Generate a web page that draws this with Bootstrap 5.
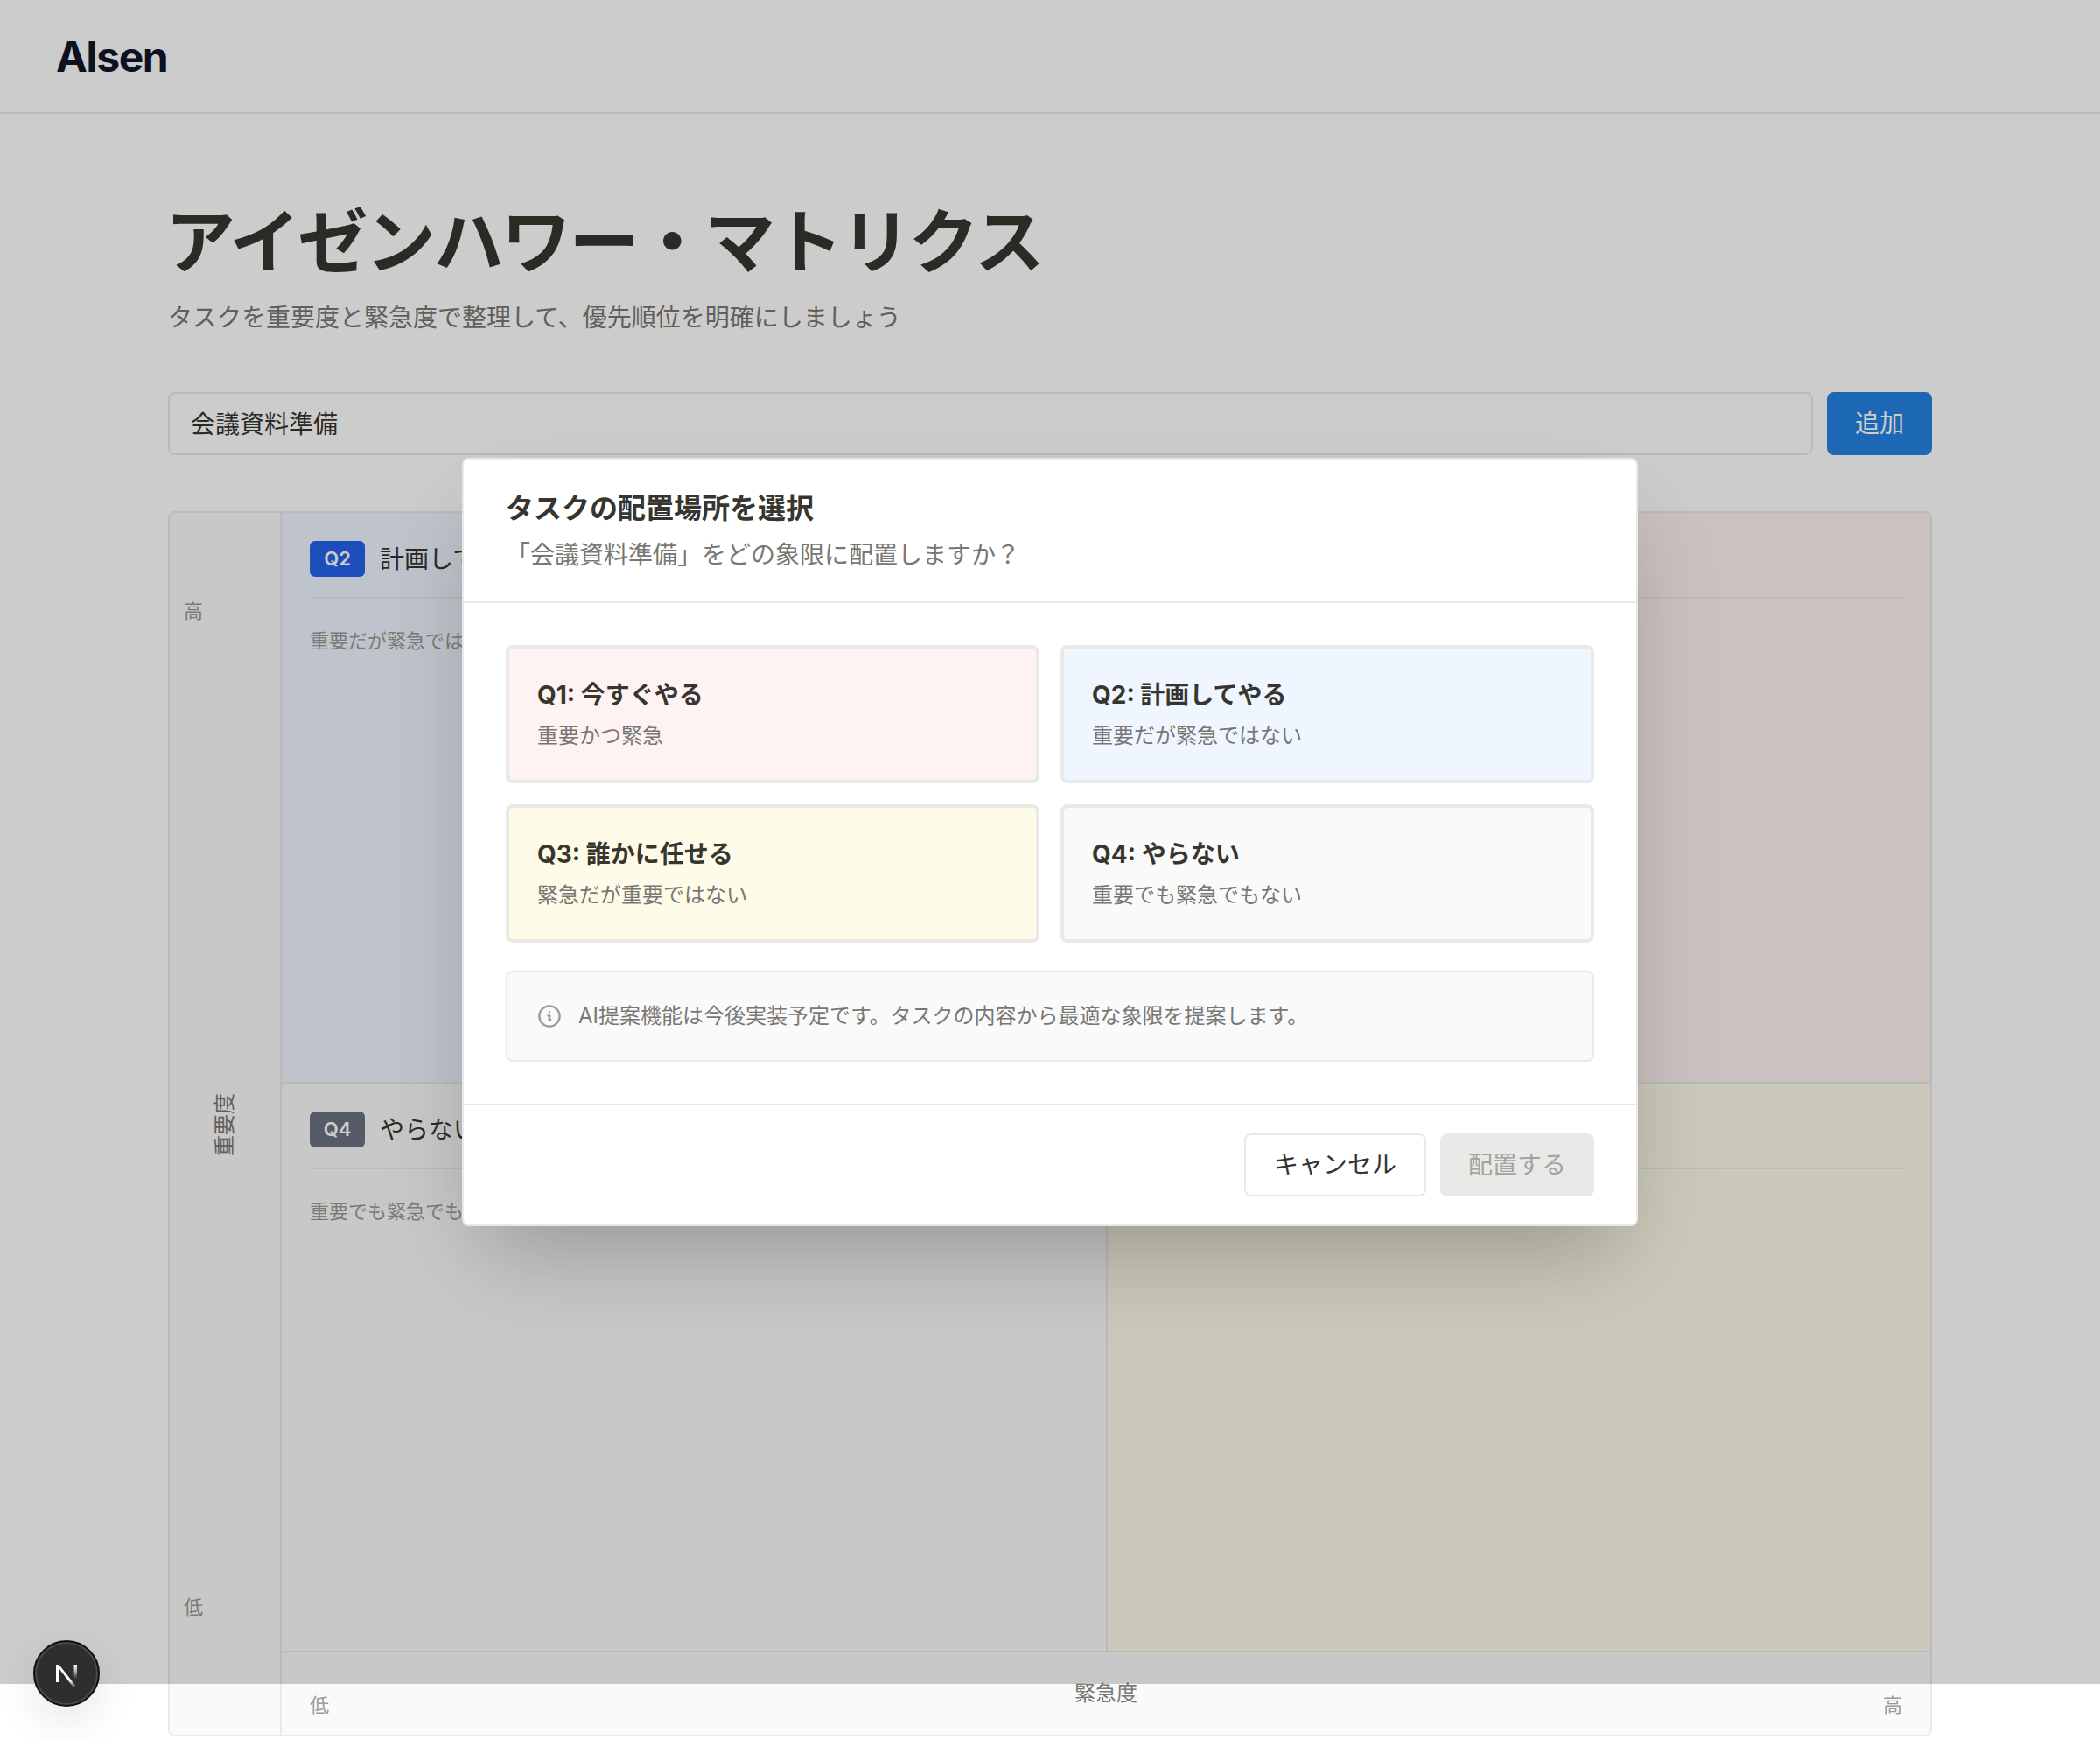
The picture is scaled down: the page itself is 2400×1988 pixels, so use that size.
<!DOCTYPE html>
<html lang="ja">
<head>
    <meta charset="UTF-8">
    <meta name="viewport" content="width=device-width, initial-scale=1.0">
    <title>Alsen - アイゼンハワー・マトリクス</title>
    <link href="https://cdn.jsdelivr.net/npm/bootstrap@5.3.2/dist/css/bootstrap.min.css" rel="stylesheet">
    <style>
        body {
            height: 1988px;
            overflow: hidden;
            background: #fff;
            color: #37352f;
            font-family: Inter, "Noto Sans CJK JP", sans-serif;
        }
        .app-header {
            height: 130px;
            padding: 2px 64px 0;
            border-bottom: 2px solid #e9e9e7;
        }
        .app-logo {
            font-size: 48px;
            font-weight: 700;
            letter-spacing: -1.5px;
            color: #0f172a;
        }
        .page-main {
            padding: 106px 192px 0;
        }
        .page-title {
            font-size: 80px;
            font-weight: 700;
            line-height: 80px;
            letter-spacing: -2.4px;
            margin: 0 0 26px -3px;
        }
        .page-lead {
            font-size: 28px;
            line-height: 42px;
            color: #787774;
            margin: 0 0 64px;
        }
        .task-form {
            gap: 16px;
            margin-bottom: 64px;
        }
        .task-input {
            height: 72px;
            font-size: 28px;
            padding: 0 24px 2px;
            color: #37352f;
            border: 2px solid #e9e9e7;
            border-radius: 8px;
        }
        .task-add {
            flex: none;
            width: 120px;
            height: 72px;
            font-size: 28px;
            border: 0;
            border-radius: 8px;
            background: #2383e2;
            color: #fff;
        }
        .matrix-box {
            height: 1400px;
            border: 2px solid #e9e9e7;
            border-radius: 8px;
            overflow: hidden;
        }
        .axis-left {
            width: 128px;
            flex: none;
            padding: 96px 16px 129px;
            background: #fafafa;
            border-right: 2px solid #e9e9e7;
            font-size: 22px;
            line-height: 33px;
            color: #9b9a97;
        }
        .axis-name {
            font-size: 24px;
            line-height: 36px;
            color: #787774;
        }
        .axis-name-v {
            transform: rotate(-90deg);
            margin-top: 34px;
            white-space: nowrap;
        }
        .quad-grid {
            display: grid;
            grid-template-columns: 1fr 1fr;
            grid-template-rows: 652px 650px;
        }
        .quad-cell {
            padding: 32px;
            border-bottom: 2px solid #e9e9e7;
        }
        .quad-cell:nth-child(even) {
            border-left: 2px solid #e9e9e7;
        }
        .quad-head {
            gap: 17px;
            height: 66px;
            align-items: flex-start;
            border-bottom: 2px solid #e9e9e7;
            font-size: 28px;
            line-height: 42px;
        }
        .quad-tag {
            width: 63px;
            height: 41px;
            border-radius: 6px;
            color: #fff;
            font-size: 22px;
            font-weight: 600;
            line-height: 41px;
            text-align: center;
        }
        .quad-desc {
            font-size: 22px;
            line-height: 33px;
            color: #9b9a97;
            margin: 32px 0 0;
        }
        .bg-q1 { background: #fef2f2; }
        .bg-q2 { background: #eff6ff; }
        .bg-q3 { background: #fefce8; }
        .bg-q4 { background: #fafafa; }
        .tag-q1 { background: #dc2626; }
        .tag-q2 { background: #2563eb; }
        .tag-q3 { background: #ca8a04; }
        .tag-q4 { background: #6b7280; }
        .axis-bottom {
            height: 94px;
            padding: 0 32px 17px;
            background: #fafafa;
            font-size: 22px;
            line-height: 33px;
            color: #9b9a97;
        }
        .axis-name-h {
            align-self: flex-start;
            margin-top: 29px;
        }
        .dim-layer {
            top: 0;
            left: 0;
            height: 1924px;
            background: rgba(0, 0, 0, .2);
            z-index: 10;
        }
        .place-dialog {
            width: 1344px;
            height: 878px;
            background: #fff;
            border: 2px solid #e9e9e7;
            border-radius: 8px;
            box-shadow: 0 50px 100px -24px rgba(0, 0, 0, .25);
        }
        .place-dialog .modal-header {
            justify-content: flex-start;
            padding: 32px 48px 0;
            height: 164px;
            flex: none;
            border-bottom: 2px solid #e9e9e7;
            border-radius: 0;
        }
        .place-title {
            font-size: 32px;
            font-weight: 700;
            line-height: 48px;
            margin: 0;
        }
        .place-lead {
            font-size: 28px;
            line-height: 42px;
            color: #787774;
            margin: 8px 0 0;
        }
        .place-dialog .modal-body {
            padding: 48px;
            flex: none;
        }
        .place-options {
            display: grid;
            grid-template-columns: 1fr 1fr;
            gap: 24px;
            margin-bottom: 32px;
        }
        .place-option {
            height: 158px;
            padding: 32px 32px 0;
            border: 4px solid #e9e9e7;
            border-radius: 8px;
        }
        .place-option-name {
            font-size: 28px;
            font-weight: 700;
            line-height: 42px;
        }
        .place-option-note {
            font-size: 24px;
            line-height: 36px;
            color: #787774;
            margin-top: 8px;
        }
        .place-hint {
            gap: 19px;
            height: 104px;
            padding: 0 32px 0 34px;
            border: 2px solid #e9e9e7;
            border-radius: 8px;
            background: #fafafa;
            font-size: 24px;
            color: #787774;
        }
        .place-hint svg {
            width: 28px;
            height: 28px;
            flex: none;
            color: #9b9a97;
        }
        .place-dialog .modal-footer {
            padding: 32px 48px 33px;
            gap: 16px;
            border-top: 2px solid #e9e9e7;
            border-radius: 0;
        }
        .place-btn {
            height: 72px;
            margin: 0;
            padding: 0 32px;
            font-size: 28px;
            border-radius: 8px;
        }
        .place-cancel {
            background: #fff;
            color: #37352f;
            border: 2px solid #e9e9e7;
        }
        .place-submit:disabled {
            background: #e9e9e7;
            color: #a3a3a0;
            border: 0;
            opacity: 1;
        }
        .dev-badge {
            left: 38px;
            top: 1874px;
            width: 76px;
            height: 76px;
            padding-top: 3px;
            border-radius: 50%;
            background: #2e2e2e;
            border: 2px solid #111;
            box-shadow: inset 0 0 0 2px #4a4a4a, 0 16px 48px rgba(0, 0, 0, .1);
            z-index: 20;
        }
    </style>
</head>
<body>
    <header class="app-header d-flex align-items-center">
        <span class="app-logo">AIsen</span>
    </header>

    <main class="page-main">
        <h1 class="page-title">アイゼンハワー・マトリクス</h1>
        <p class="page-lead">タスクを重要度と緊急度で整理して、優先順位を明確にしましょう</p>

        <form class="task-form d-flex">
            <input type="text" class="form-control task-input flex-grow-1" value="会議資料準備">
            <button type="button" class="btn task-add">追加</button>
        </form>

        <div class="matrix-box d-flex">
            <div class="axis-left d-flex flex-column justify-content-between">
                <span>高</span>
                <span class="axis-name axis-name-v align-self-center">重要度</span>
                <span>低</span>
            </div>
            <div class="flex-grow-1 d-flex flex-column">
                <div class="quad-grid">
                    <section class="quad-cell bg-q2">
                        <div class="quad-head d-flex"><span class="quad-tag tag-q2">Q2</span><span>計画してやる</span></div>
                        <p class="quad-desc">重要だが緊急ではない</p>
                    </section>
                    <section class="quad-cell bg-q1">
                        <div class="quad-head d-flex"><span class="quad-tag tag-q1">Q1</span><span>今すぐやる</span></div>
                        <p class="quad-desc">重要かつ緊急</p>
                    </section>
                    <section class="quad-cell bg-q4">
                        <div class="quad-head d-flex"><span class="quad-tag tag-q4">Q4</span><span>やらない</span></div>
                        <p class="quad-desc">重要でも緊急でもない</p>
                    </section>
                    <section class="quad-cell bg-q3">
                        <div class="quad-head d-flex"><span class="quad-tag tag-q3">Q3</span><span>誰かに任せる</span></div>
                        <p class="quad-desc">緊急だが重要ではない</p>
                    </section>
                </div>
                <div class="axis-bottom d-flex justify-content-between align-items-end">
                    <span>低</span>
                    <span class="axis-name axis-name-h">緊急度</span>
                    <span>高</span>
                </div>
            </div>
        </div>
    </main>

    <div class="dim-layer position-absolute w-100 d-flex align-items-center justify-content-center">
        <div class="modal-content place-dialog">
            <div class="modal-header flex-column align-items-start">
                <h2 class="place-title">タスクの配置場所を選択</h2>
                <p class="place-lead">「会議資料準備」をどの象限に配置しますか？</p>
            </div>
            <div class="modal-body">
                <div class="place-options">
                    <div class="place-option bg-q1">
                        <div class="place-option-name">Q1: 今すぐやる</div>
                        <div class="place-option-note">重要かつ緊急</div>
                    </div>
                    <div class="place-option bg-q2">
                        <div class="place-option-name">Q2: 計画してやる</div>
                        <div class="place-option-note">重要だが緊急ではない</div>
                    </div>
                    <div class="place-option bg-q3">
                        <div class="place-option-name">Q3: 誰かに任せる</div>
                        <div class="place-option-note">緊急だが重要ではない</div>
                    </div>
                    <div class="place-option bg-q4">
                        <div class="place-option-name">Q4: やらない</div>
                        <div class="place-option-note">重要でも緊急でもない</div>
                    </div>
                </div>
                <div class="place-hint d-flex align-items-center">
                    <svg viewBox="0 0 24 24" fill="none" stroke="currentColor" stroke-linecap="round" stroke-linejoin="round">
                        <circle cx="12" cy="12" r="10" stroke-width="2"/>
                        <path stroke-width="2" d="M10.800 11.500l.7-.2a.6.6 0 0 1 .8.7l-.7 3.100a.6.6 0 0 0 .8.7l.7-.2M12 7.800h.01"/>
                    </svg>
                    <span>AI提案機能は今後実装予定です。タスクの内容から最適な象限を提案します。</span>
                </div>
            </div>
            <div class="modal-footer">
                <button type="button" class="btn place-btn place-cancel">キャンセル</button>
                <button type="button" class="btn place-btn place-submit" disabled>配置する</button>
            </div>
        </div>
    </div>

    <div class="dev-badge position-absolute d-flex align-items-center justify-content-center">
        <svg width="30" height="30" viewBox="0 0 30 30" fill="none">
            <defs>
                <linearGradient id="nDiag" x1="10" y1="8" x2="27" y2="28" gradientUnits="userSpaceOnUse">
                    <stop offset=".6" stop-color="#fff"/>
                    <stop offset="1" stop-color="#fff" stop-opacity="0"/>
                </linearGradient>
                <linearGradient id="nStem" x1="25" y1="3" x2="25" y2="19" gradientUnits="userSpaceOnUse">
                    <stop stop-color="#fff"/>
                    <stop offset=".5" stop-color="#fff" stop-opacity=".6"/>
                    <stop offset="1" stop-color="#fff" stop-opacity="0"/>
                </linearGradient>
            </defs>
            <path d="M3 3h3.500v20H3z" fill="#fff"/>
            <path d="M3 3h3.500L27 29h-4z" fill="url(#nDiag)"/>
            <path d="M23.500 3H27v18h-3.500z" fill="url(#nStem)"/>
        </svg>
    </div>

    <script src="https://cdn.jsdelivr.net/npm/bootstrap@5.3.2/dist/js/bootstrap.bundle.min.js"></script>
</body>
</html>
